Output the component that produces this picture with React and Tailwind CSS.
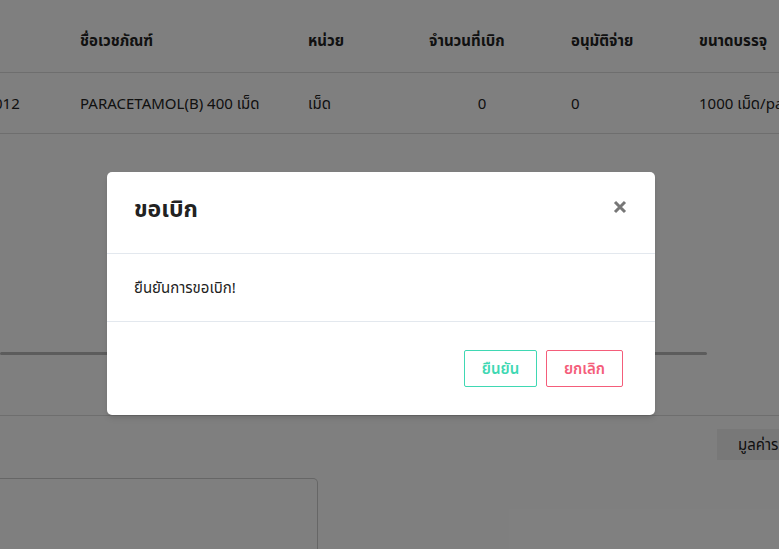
import React from 'react';

const font = { fontFamily: '"Noto Sans", "Noto Sans Thai", "Liberation Sans", sans-serif' };

export default function App() {
  return (
    <div className="relative min-h-screen w-full overflow-hidden bg-white text-[#222]" style={font}>
      {/* page behind the modal */}
      <div className="flex h-[549px] flex-col overflow-hidden">
        <div className="flex h-[73px] shrink-0 items-center border-b border-[#ddd] pt-[8px] text-[15px] font-bold">
          <div className="w-[80px] shrink-0" />
          <div className="w-[228px] shrink-0">ชื่อเวชภัณฑ์</div>
          <div className="w-[121px] shrink-0">หน่วย</div>
          <div className="w-[142px] shrink-0">จำนวนที่เบิก</div>
          <div className="w-[128px] shrink-0">อนุมัติจ่าย</div>
          <div className="shrink-0 whitespace-nowrap">ขนาดบรรจุ</div>
        </div>
        <div className="flex h-[61px] shrink-0 items-center border-b border-[#ddd] text-[15px]">
          <div className="w-[80px] shrink-0 overflow-hidden">
            <div className="-ml-[6px]">012</div>
          </div>
          <div className="w-[228px] shrink-0 whitespace-nowrap">PARACETAMOL(B) 400 เม็ด</div>
          <div className="w-[121px] shrink-0">เม็ด</div>
          <div className="w-[106px] shrink-0 text-center">0</div>
          <div className="w-[36px] shrink-0" />
          <div className="w-[128px] shrink-0">0</div>
          <div className="shrink-0 whitespace-nowrap">1000 เม็ด/pack</div>
        </div>
        <div className="mt-[218px] h-[3px] w-[707px] shrink-0 rounded-full bg-[#b8b8b8]" />
        <div className="mt-[60px] flex shrink-0 justify-end border-t border-[#ddd] pt-[13px]">
          <div className="flex h-[31px] w-[62px] items-center overflow-hidden whitespace-nowrap bg-[#f0f0f0] pl-[21px] text-[15px]">
            มูลค่ารวม
          </div>
        </div>
        <div className="mt-[18px] h-[120px] w-[318px] shrink-0 rounded-tr-[5px] border border-l-0 border-[#ccc]" />
      </div>

      {/* overlay */}
      <div className="absolute inset-0 bg-black/50" />

      {/* modal */}
      <div className="absolute left-[107px] top-[172px] w-[548px] rounded-[5px] bg-white shadow-md">
        <div className="flex h-[82px] items-center justify-between border-b border-[#e3e8ee] px-[27px] pb-[8px]">
          <div className="text-[23px] font-bold text-[#222]">ขอเบิก</div>
          <svg width="14" height="14" viewBox="0 0 14 14" className="mr-[1px] -mt-[4px]">
            <path d="M2 2 L12 12 M12 2 L2 12" stroke="#777" strokeWidth="3" />
          </svg>
        </div>
        <div className="flex h-[68px] items-center border-b border-[#e3e8ee] pl-[27px] text-[15px] text-[#222]">
          ยืนยันการขอเบิก!
        </div>
        <div className="flex h-[93px] items-center justify-end gap-[9px] pr-[32px]">
          <button className="h-[37px] w-[73px] rounded-[2px] border border-[#3fd8b3] text-[15px] font-semibold text-[#3fd8b3]">
            ยืนยัน
          </button>
          <button className="h-[37px] w-[77px] rounded-[2px] border border-[#f45d7a] text-[15px] font-semibold text-[#f45d7a]">
            ยกเลิก
          </button>
        </div>
      </div>
    </div>
  );
}
